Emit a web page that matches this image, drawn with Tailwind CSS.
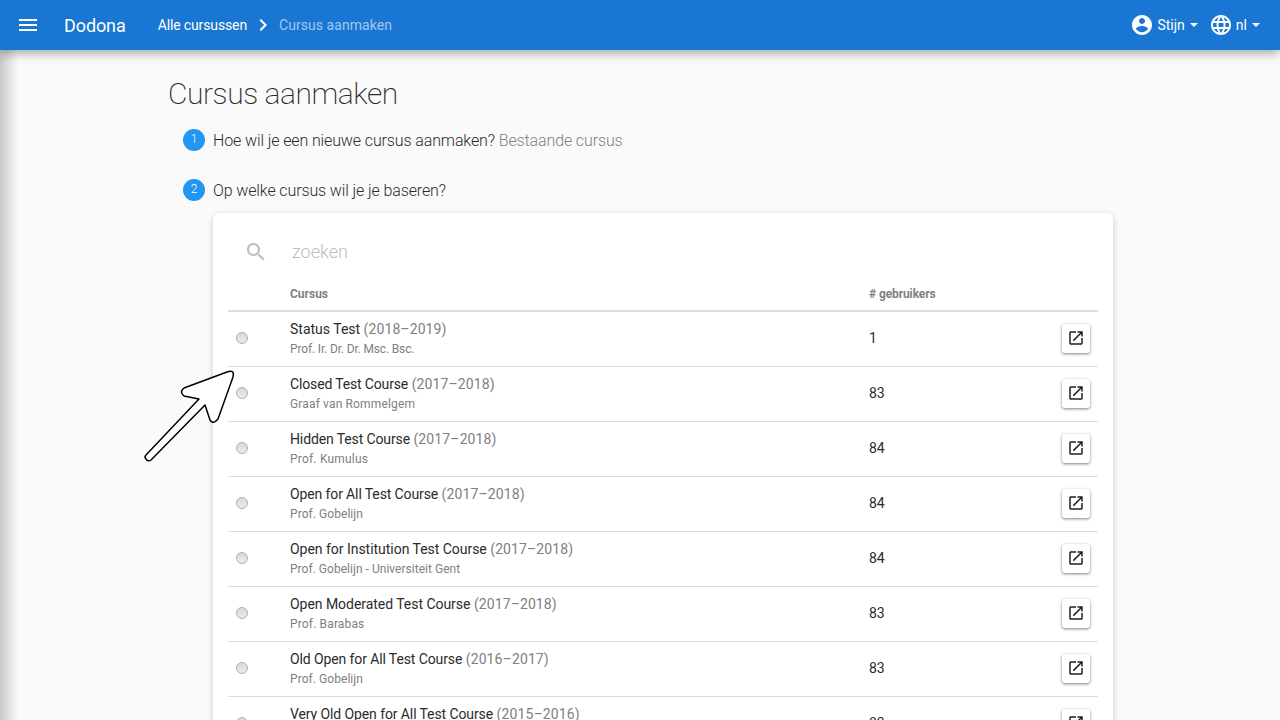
<!DOCTYPE html>
<html lang="nl">
<head>
    <meta charset="UTF-8">
    <meta name="viewport" content="width=device-width, initial-scale=1.0">
    <title>Cursus aanmaken - Dodona</title>
    <script src="https://cdn.jsdelivr.net/npm/@tailwindcss/browser@4"></script>
</head>
<body class="relative h-[720px] overflow-hidden bg-[#fafafa] font-[Roboto,sans-serif] text-[14px] text-[#2b2b2b]">
    <!-- top bar -->
    <nav class="relative z-20 flex h-[50px] items-center bg-[#1976d2] pr-[20px] text-white shadow-[0_3px_10px_rgba(0,0,0,0.35)]">
        <svg class="ml-[16px] h-[24px] w-[24px]" viewBox="0 0 24 24" fill="white"><path d="M3 18h18v-2H3v2zm0-5h18v-2H3v2zm0-7v2h18V6H3z"/></svg>
        <span class="ml-[24px] text-[18px] tracking-[-0.1px]">Dodona</span>
        <a class="ml-[32px] tracking-[-0.13px]">Alle cursussen</a>
        <svg class="ml-[4px] h-[24px] w-[24px]" viewBox="0 0 24 24" fill="white"><path d="M10 6 8.59 7.41 13.17 12l-4.58 4.59L10 18l6-6z"/></svg>
        <span class="ml-[4px] tracking-[0.05px] text-white/60">Cursus aanmaken</span>
        <div class="ml-auto flex items-center">
            <svg class="h-[24px] w-[24px]" viewBox="0 0 24 24" fill="white"><path d="M12 2C6.48 2 2 6.48 2 12s4.48 10 10 10 10-4.48 10-10S17.52 2 12 2zm0 3c1.66 0 3 1.34 3 3s-1.34 3-3 3-3-1.34-3-3 1.34-3 3-3zm0 14.2c-2.5 0-4.71-1.28-6-3.22.03-1.99 4-3.08 6-3.08 1.99 0 5.97 1.09 6 3.08-1.29 1.94-3.5 3.22-6 3.22z"/></svg>
            <span class="ml-[3px]">Stijn</span>
            <span class="ml-[5px] h-0 w-0 border-x-[4px] border-t-[4px] border-x-transparent border-t-white"></span>
            <svg class="ml-[11px] h-[24px] w-[24px]" viewBox="0 0 24 24" fill="white"><path d="M11.99 2C6.47 2 2 6.48 2 12s4.47 10 9.99 10C17.52 22 22 17.52 22 12S17.52 2 11.99 2zm6.93 6h-2.95c-.32-1.25-.78-2.45-1.38-3.56 1.84.63 3.37 1.91 4.33 3.56zM12 4.04c.83 1.2 1.48 2.53 1.91 3.96h-3.82c.43-1.43 1.08-2.76 1.91-3.96zM4.26 14C4.1 13.36 4 12.69 4 12s.1-1.36.26-2h3.38c-.08.66-.14 1.32-.14 2 0 .68.06 1.34.14 2H4.26zm.82 2h2.95c.32 1.25.78 2.45 1.38 3.56-1.84-.63-3.37-1.9-4.33-3.56zm2.95-8H5.08c.96-1.66 2.49-2.93 4.33-3.56C8.81 5.55 8.35 6.75 8.03 8zM12 19.96c-.83-1.2-1.48-2.53-1.91-3.96h3.82c-.43 1.43-1.08 2.76-1.91 3.96zM14.34 14H9.66c-.09-.66-.16-1.32-.16-2 0-.68.07-1.35.16-2h4.68c.09.65.16 1.32.16 2 0 .68-.07 1.34-.16 2zm.25 5.56c.6-1.11 1.06-2.31 1.38-3.56h2.95c-.96 1.65-2.49 2.93-4.33 3.56zM16.36 14c.08-.66.14-1.32.14-2 0-.68-.06-1.34-.14-2h3.38c.16.64.26 1.31.26 2s-.1 1.36-.26 2h-3.38z"/></svg>
            <span class="ml-[3px]">nl</span>
            <span class="ml-[5px] h-0 w-0 border-x-[4px] border-t-[4px] border-x-transparent border-t-white"></span>
        </div>
    </nav>

    <!-- shadow of the collapsed sidebar -->
    <div class="absolute bottom-0 left-0 top-[50px] w-[18px] bg-gradient-to-r from-black/20 to-transparent"></div>

    <main class="ml-[168px] w-[945px]">
        <h1 class="mt-[24px] text-[30px] font-extralight leading-[40px] tracking-[-0.45px]">Cursus aanmaken</h1>

        <div class="ml-[15px] mt-[13px] flex h-[28px] items-center text-[16px] font-light tracking-[-0.12px]">
            <span class="mb-[2px] flex h-[22px] w-[22px] items-center justify-center rounded-full bg-[#2196f3] pb-[2px] text-[12px] text-white">1</span>
            <span class="ml-[8px]">Hoe wil je een nieuwe cursus aanmaken? <span class="text-[#808080]">Bestaande cursus</span></span>
        </div>
        <div class="ml-[15px] mt-[22px] flex h-[28px] items-center text-[16px] font-light tracking-[-0.12px]">
            <span class="mb-[2px] flex h-[22px] w-[22px] items-center justify-center rounded-full bg-[#2196f3] pb-[2px] text-[12px] text-white">2</span>
            <span class="ml-[8px]">Op welke cursus wil je je baseren?</span>
        </div>

        <!-- course card -->
        <section class="ml-[45px] mt-[8px] w-[900px] rounded-[6px] bg-white px-[15px] shadow-[0_2px_6px_rgba(0,0,0,0.2)]">
            <div class="flex h-[66px] items-center pt-[11px]">
                <svg class="ml-[16px] h-[24px] w-[24px]" viewBox="0 0 24 24" fill="#bdbdbd"><path d="M15.5 14h-.79l-.28-.27C15.41 12.59 16 11.11 16 9.5 16 5.91 13.09 3 9.5 3S3 5.91 3 9.5 5.91 16 9.5 16c1.61 0 3.09-.59 4.23-1.57l.27.28v.79l5 4.99L20.49 19l-4.99-5zm-6 0C7.01 14 5 11.99 5 9.5S7.01 5 9.5 5 14 7.01 14 9.5 11.99 14 9.5 14z"/></svg>
                <span class="ml-[24px] text-[18px] font-light text-[#bdbdbd]">zoeken</span>
            </div>
            <div class="flex h-[33px] items-center border-b-2 border-[#dcdcdc] pb-[2px] text-[12px] font-bold text-[#808080]">
                <span class="ml-[62px] w-[579px]">Cursus</span>
                <span class="tracking-[-0.1px]"># gebruikers</span>
            </div>
            <div class="flex h-[55px] items-center border-b border-[#dcdcdc] pb-[2px]">
                <span class="ml-[8px] h-[12px] w-[12px] rounded-full border border-[#b0b0b0] bg-gradient-to-b from-[#d8d8d8] to-[#ececec]"></span>
                <div class="ml-[42px] w-[579px]"><div>Status Test <span class="tracking-[0.1px] text-[#808080]">(2018–2019)</span></div><div class="text-[12px] tracking-[-0.15px] text-[#808080]">Prof. Ir. Dr. Dr. Msc. Bsc.</div></div>
                <span class="w-[193px]">1</span>
                <button class="flex h-[29px] w-[28px] items-center justify-center rounded-[3px] bg-white shadow-[0_1px_3px_rgba(0,0,0,0.5)]"><svg class="h-[18px] w-[18px]" viewBox="0 0 24 24" fill="#212121"><path d="M19 19H5V5h7V3H5c-1.11 0-2 .9-2 2v14c0 1.1.89 2 2 2h14c1.1 0 2-.9 2-2v-7h-2v7zM14 3v2h3.59l-9.83 9.83 1.41 1.41L19 6.41V10h2V3h-7z"/></svg></button>
            </div>
            <div class="flex h-[55px] items-center border-b border-[#dcdcdc] pb-[2px]">
                <span class="ml-[8px] h-[12px] w-[12px] rounded-full border border-[#b0b0b0] bg-gradient-to-b from-[#d8d8d8] to-[#ececec]"></span>
                <div class="ml-[42px] w-[579px]"><div><span class="tracking-[-0.15px]">Closed Test Course</span> <span class="tracking-[0.12px] text-[#808080]">(2017–2018)</span></div><div class="text-[12px] tracking-[0.15px] text-[#808080]">Graaf van Rommelgem</div></div>
                <span class="w-[193px]">83</span>
                <button class="flex h-[29px] w-[28px] items-center justify-center rounded-[3px] bg-white shadow-[0_1px_3px_rgba(0,0,0,0.5)]"><svg class="h-[18px] w-[18px]" viewBox="0 0 24 24" fill="#212121"><path d="M19 19H5V5h7V3H5c-1.11 0-2 .9-2 2v14c0 1.1.89 2 2 2h14c1.1 0 2-.9 2-2v-7h-2v7zM14 3v2h3.59l-9.83 9.83 1.41 1.41L19 6.41V10h2V3h-7z"/></svg></button>
            </div>
            <div class="flex h-[55px] items-center border-b border-[#dcdcdc] pb-[2px]">
                <span class="ml-[8px] h-[12px] w-[12px] rounded-full border border-[#b0b0b0] bg-gradient-to-b from-[#d8d8d8] to-[#ececec]"></span>
                <div class="ml-[42px] w-[579px]"><div><span class="tracking-[-0.12px]">Hidden Test Course</span> <span class="tracking-[0.12px] text-[#808080]">(2017–2018)</span></div><div class="text-[12px] tracking-[0.2px] text-[#808080]">Prof. Kumulus</div></div>
                <span class="w-[193px]">84</span>
                <button class="flex h-[29px] w-[28px] items-center justify-center rounded-[3px] bg-white shadow-[0_1px_3px_rgba(0,0,0,0.5)]"><svg class="h-[18px] w-[18px]" viewBox="0 0 24 24" fill="#212121"><path d="M19 19H5V5h7V3H5c-1.11 0-2 .9-2 2v14c0 1.1.89 2 2 2h14c1.1 0 2-.9 2-2v-7h-2v7zM14 3v2h3.59l-9.83 9.83 1.41 1.41L19 6.41V10h2V3h-7z"/></svg></button>
            </div>
            <div class="flex h-[55px] items-center border-b border-[#dcdcdc] pb-[2px]">
                <span class="ml-[8px] h-[12px] w-[12px] rounded-full border border-[#b0b0b0] bg-gradient-to-b from-[#d8d8d8] to-[#ececec]"></span>
                <div class="ml-[42px] w-[579px]"><div><span class="tracking-[-0.12px]">Open for All Test Course</span> <span class="tracking-[0.12px] text-[#808080]">(2017–2018)</span></div><div class="text-[12px] tracking-[0.06px] text-[#808080]">Prof. Gobelijn</div></div>
                <span class="w-[193px]">84</span>
                <button class="flex h-[29px] w-[28px] items-center justify-center rounded-[3px] bg-white shadow-[0_1px_3px_rgba(0,0,0,0.5)]"><svg class="h-[18px] w-[18px]" viewBox="0 0 24 24" fill="#212121"><path d="M19 19H5V5h7V3H5c-1.11 0-2 .9-2 2v14c0 1.1.89 2 2 2h14c1.1 0 2-.9 2-2v-7h-2v7zM14 3v2h3.59l-9.83 9.83 1.41 1.41L19 6.41V10h2V3h-7z"/></svg></button>
            </div>
            <div class="flex h-[55px] items-center border-b border-[#dcdcdc] pb-[2px]">
                <span class="ml-[8px] h-[12px] w-[12px] rounded-full border border-[#b0b0b0] bg-gradient-to-b from-[#d8d8d8] to-[#ececec]"></span>
                <div class="ml-[42px] w-[579px]"><div><span class="tracking-[-0.03px]">Open for Institution Test Course</span> <span class="tracking-[0.1px] text-[#808080]">(2017–2018)</span></div><div class="text-[12px] tracking-[0.03px] text-[#808080]">Prof. Gobelijn - Universiteit Gent</div></div>
                <span class="w-[193px]">84</span>
                <button class="flex h-[29px] w-[28px] items-center justify-center rounded-[3px] bg-white shadow-[0_1px_3px_rgba(0,0,0,0.5)]"><svg class="h-[18px] w-[18px]" viewBox="0 0 24 24" fill="#212121"><path d="M19 19H5V5h7V3H5c-1.11 0-2 .9-2 2v14c0 1.1.89 2 2 2h14c1.1 0 2-.9 2-2v-7h-2v7zM14 3v2h3.59l-9.83 9.83 1.41 1.41L19 6.41V10h2V3h-7z"/></svg></button>
            </div>
            <div class="flex h-[55px] items-center border-b border-[#dcdcdc] pb-[2px]">
                <span class="ml-[8px] h-[12px] w-[12px] rounded-full border border-[#b0b0b0] bg-gradient-to-b from-[#d8d8d8] to-[#ececec]"></span>
                <div class="ml-[42px] w-[579px]"><div><span class="tracking-[-0.04px]">Open Moderated Test Course</span> <span class="tracking-[0.1px] text-[#808080]">(2017–2018)</span></div><div class="text-[12px] tracking-[0.15px] text-[#808080]">Prof. Barabas</div></div>
                <span class="w-[193px]">83</span>
                <button class="flex h-[29px] w-[28px] items-center justify-center rounded-[3px] bg-white shadow-[0_1px_3px_rgba(0,0,0,0.5)]"><svg class="h-[18px] w-[18px]" viewBox="0 0 24 24" fill="#212121"><path d="M19 19H5V5h7V3H5c-1.11 0-2 .9-2 2v14c0 1.1.89 2 2 2h14c1.1 0 2-.9 2-2v-7h-2v7zM14 3v2h3.59l-9.83 9.83 1.41 1.41L19 6.41V10h2V3h-7z"/></svg></button>
            </div>
            <div class="flex h-[55px] items-center border-b border-[#dcdcdc] pb-[2px]">
                <span class="ml-[8px] h-[12px] w-[12px] rounded-full border border-[#b0b0b0] bg-gradient-to-b from-[#d8d8d8] to-[#ececec]"></span>
                <div class="ml-[42px] w-[579px]"><div><span class="tracking-[-0.11px]">Old Open for All Test Course</span> <span class="tracking-[0.12px] text-[#808080]">(2016–2017)</span></div><div class="text-[12px] tracking-[0.06px] text-[#808080]">Prof. Gobelijn</div></div>
                <span class="w-[193px]">83</span>
                <button class="flex h-[29px] w-[28px] items-center justify-center rounded-[3px] bg-white shadow-[0_1px_3px_rgba(0,0,0,0.5)]"><svg class="h-[18px] w-[18px]" viewBox="0 0 24 24" fill="#212121"><path d="M19 19H5V5h7V3H5c-1.11 0-2 .9-2 2v14c0 1.1.89 2 2 2h14c1.1 0 2-.9 2-2v-7h-2v7zM14 3v2h3.59l-9.83 9.83 1.41 1.41L19 6.41V10h2V3h-7z"/></svg></button>
            </div>
            <div class="flex h-[55px] items-center border-b border-[#dcdcdc] pb-[2px]">
                <span class="ml-[8px] h-[12px] w-[12px] rounded-full border border-[#b0b0b0] bg-gradient-to-b from-[#d8d8d8] to-[#ececec]"></span>
                <div class="ml-[42px] w-[579px]"><div><span class="tracking-[-0.1px]">Very Old Open for All Test Course</span> <span class="tracking-[0.12px] text-[#808080]">(2015–2016)</span></div><div class="text-[12px] tracking-[0.06px] text-[#808080]">Prof. Gobelijn</div></div>
                <span class="w-[193px]">83</span>
                <button class="flex h-[29px] w-[28px] items-center justify-center rounded-[3px] bg-white shadow-[0_1px_3px_rgba(0,0,0,0.5)]"><svg class="h-[18px] w-[18px]" viewBox="0 0 24 24" fill="#212121"><path d="M19 19H5V5h7V3H5c-1.11 0-2 .9-2 2v14c0 1.1.89 2 2 2h14c1.1 0 2-.9 2-2v-7h-2v7zM14 3v2h3.59l-9.83 9.83 1.41 1.41L19 6.41V10h2V3h-7z"/></svg></button>
            </div>
        </section>
    </main>

    <!-- annotation arrow over the page -->
    <svg class="absolute left-[140px] top-[365px] z-10 h-[100px] w-[100px]" viewBox="140 365 100 100" fill="white" stroke="black" stroke-width="1.5" stroke-linejoin="round">
        <path d="M146 455 L199 399 L184 396 Q179 392 184 388 L227 372 Q235 369 233 377 L218 419 Q213 425 210 420 L205 405 L151 460 Q148 462 146 459 Q144 457 146 455 Z"/>
    </svg>
</body>
</html>
